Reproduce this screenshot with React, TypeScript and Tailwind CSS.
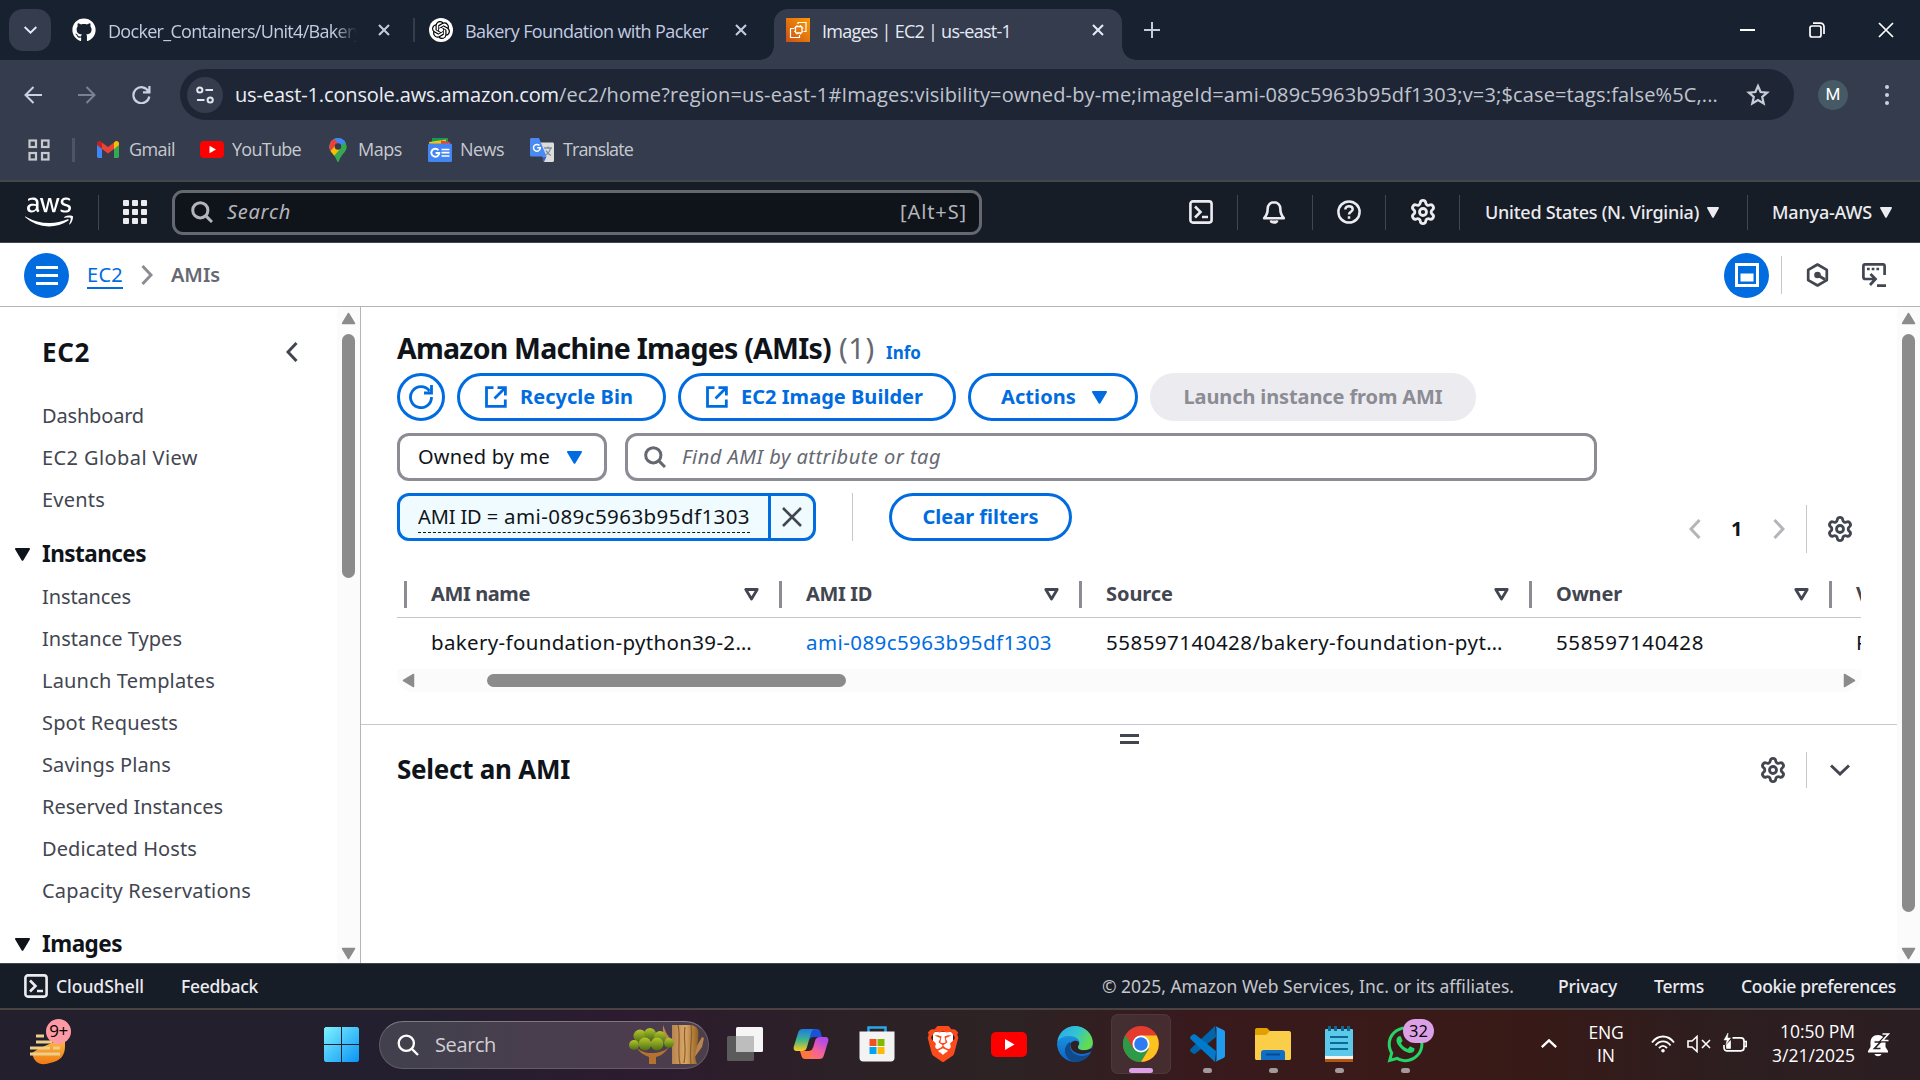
import React, { useLayoutEffect, useRef, useState } from 'react';
import { FaAws, FaGithub, FaWhatsapp } from 'react-icons/fa';
import { SiBrave, SiOpenai } from 'react-icons/si';
import { Settings } from 'lucide-react';

/* Text whose tracking is adjusted so that it spans `w` pixels. */
function Fit({ w, children, className = '' }: { w: number; children: string; className?: string }) {
  const ref = useRef<HTMLSpanElement>(null);
  const [spacing, setSpacing] = useState(0);
  useLayoutEffect(() => {
    const el = ref.current;
    if (el) setSpacing((w - el.getBoundingClientRect().width) / children.length);
  }, []);
  return (
    <span ref={ref} className={`inline-block shrink-0 whitespace-nowrap ${className}`} style={{ letterSpacing: spacing }}>
      {children}
    </span>
  );
}

const seg = "font-['Open_Sans','Noto_Sans',sans-serif]";
const ember = "font-['Noto_Sans','Open_Sans',sans-serif]";

function Close({ className = '' }: { className?: string }) {
  return (
    <svg className={`h-3 w-3 shrink-0 ${className}`} viewBox="0 0 12 12" stroke="currentColor" strokeWidth="2.1" fill="none">
      <path d="M1 1l10 10M11 1L1 11" />
    </svg>
  );
}

function Caret({ className = '' }: { className?: string }) {
  return (
    <svg className={`shrink-0 ${className}`} viewBox="0 0 15 13" fill="currentColor" preserveAspectRatio="none">
      <path d="M1.2 0h12.6c1 0 1.5 .8 1 1.6L8.4 12.3c-.4.7-1.4.7-1.8 0L.2 1.6C-.3.8.2 0 1.2 0z" />
    </svg>
  );
}

function SearchIcon({ className = '', sw = 3 }: { className?: string; sw?: number }) {
  return (
    <svg className={`shrink-0 ${className}`} viewBox="0 0 22 22" fill="none" stroke="currentColor" strokeWidth={sw}>
      <circle cx="9.3" cy="9.3" r="7.6" />
      <path d="M14.6 14.6L21 21" />
    </svg>
  );
}

function Shell({ className = '' }: { className?: string }) {
  return (
    <svg className={`h-6 w-6 shrink-0 ${className}`} viewBox="0 0 24 24" fill="none" stroke="currentColor" strokeWidth="2.6">
      <rect x="1.4" y="1.4" width="21.2" height="21.2" rx="2.5" />
      <path d="M6 6.5l5.5 5.5L6 17.5M13 17h6" />
    </svg>
  );
}

function Chevron({ dir, className = '' }: { dir: 'l' | 'r' | 'd' | 'u'; className?: string }) {
  const d = { l: 'M10.5 1L2 10l8.5 9', r: 'M1.5 1L10 10l-8.5 9', d: 'M1 1.5L10 10l9-8.5', u: 'M1 10L10 1.500l9 8.500' }[dir];
  const flat = dir === 'd' || dir === 'u';
  return (
    <svg className={`shrink-0 ${className}`} viewBox={flat ? '0 0 20 12' : '0 0 12 20'} fill="none" stroke="currentColor" strokeWidth="3">
      <path d={d} />
    </svg>
  );
}

function ScrollArrow({ d, className = '' }: { d: string; className?: string }) {
  return (
    <svg className={`h-[15px] w-[15px] shrink-0 text-[#8b8b8b] ${className}`} viewBox="0 0 15 15" fill="currentColor" stroke="currentColor" strokeWidth="1.5" strokeLinejoin="round">
      <path d={d} />
    </svg>
  );
}

function VScroll({ thumb }: { thumb: string }) {
  return (
    <div className="flex h-full w-[23px] shrink-0 flex-col items-center bg-[#fbfbfb]">
      <ScrollArrow className="mt-[4px]" d="M1.5 12.5L7.5 2.5l6 10z" />
      <div className={`mt-[8px] w-[13px] rounded-full bg-[#8b8b8b] ${thumb}`} />
      <ScrollArrow className="mt-auto mb-[2px]" d="M1.5 2.5L7.5 12.5l6-10z" />
    </div>
  );
}

/* ---------- Browser chrome ---------- */

function TabStrip() {
  return (
    <div className="flex h-[60px] items-start bg-[#182130] text-[18px] text-[#c3cbe0]">
      <div className="mt-[9px] ml-[9px] flex h-[42px] w-[42px] shrink-0 items-center justify-center rounded-[14px] bg-[#343c4d] text-[#e6eaf5]">
        <Chevron dir="d" className="h-[8px] w-[13px]" />
      </div>
      <div className="flex h-[60px] w-[362px] shrink-0 items-center">
        <FaGithub className="ml-[21px] h-6 w-6 shrink-0 text-white" />
        <div className="mt-[2px] ml-3 w-[249px] overflow-hidden [mask-image:linear-gradient(to_right,black_91%,transparent)]">
          <Fit w={254}>Docker_Containers/Unit4/Bakery</Fit>
        </div>
        <Close className="ml-[21px]" />
      </div>
      <div className="mt-[18px] h-6 w-[2px] shrink-0 bg-[#343c4d]" />
      <div className="flex h-[60px] w-[345px] shrink-0 items-center">
        <div className="ml-[14px] flex h-6 w-6 items-center justify-center rounded-full bg-white text-black">
          <SiOpenai className="h-[18px] w-[18px]" />
        </div>
        <Fit w={243} className="mt-[2px] ml-[12px]">Bakery Foundation with Packer</Fit>
        <Close className="ml-[27px]" />
      </div>
      <div className="flex h-[60px] shrink-0 items-end">
        <div className="h-[14px] w-[14px] bg-[radial-gradient(circle_at_0_0,#182130_13.5px,#343c4d_14px)]" />
        <div className="flex h-[51px] w-[348px] items-center rounded-t-[14px] bg-[#343c4d] text-[#e6eaf5]">
          <svg className="mb-[9px] ml-3 h-6 w-6" viewBox="0 0 24 24" fill="none" stroke="#fff">
            <defs>
              <linearGradient id="ec2" x1="0" y1="1" x2="1" y2="0">
                <stop offset="0" stopColor="#c8511b" />
                <stop offset="1" stopColor="#ff9900" />
              </linearGradient>
            </defs>
            <rect width="24" height="24" fill="url(#ec2)" stroke="none" />
            <rect x="9.5" y="8.5" width="6.5" height="6.5" rx="1" strokeWidth="1.3" />
            <path d="M11 7v1.5M14.5 7v1.5M11 15v1.5M14.5 15v1.5M8 10h1.5M8 13.500h1.500M16 10h1.500M16 13.500h1.500" strokeWidth=".9" />
            <path d="M12 6V4.500h8v9h-2M8 10.500H4.500v9h9V17" strokeWidth="1.2" />
          </svg>
          <Fit w={189} className="mb-[7px] ml-3">Images | EC2 | us-east-1</Fit>
          <Close className="mb-[9px] ml-[81px]" />
        </div>
        <div className="h-[14px] w-[14px] bg-[radial-gradient(circle_at_100%_0,#182130_13.5px,#343c4d_14px)]" />
      </div>
      <svg className="mt-[22px] ml-[8px] h-4 w-4 shrink-0" viewBox="0 0 16 16" stroke="currentColor" strokeWidth="2">
        <path d="M8 0v16M0 8h16" />
      </svg>
      <div className="ml-auto flex h-[60px] items-center text-white">
        <div className="h-[2px] w-[15px] bg-white" />
        <svg className="ml-[54px] h-4 w-4" viewBox="0 0 16 16" fill="none" stroke="currentColor" strokeWidth="1.7">
          <rect x="1" y="4" width="11" height="11" rx="2" />
          <path d="M4 1.200h7.500a3.500 3.500 0 0 1 3.500 3.500V12" />
        </svg>
        <svg className="mr-[26px] ml-[53px] h-4 w-4" viewBox="0 0 16 16" fill="none" stroke="currentColor" strokeWidth="1.700">
          <path d="M1 1l14 14M15 1L1 15" />
        </svg>
      </div>
    </div>
  );
}

function Toolbar() {
  return (
    <div className="flex h-[69px] items-center bg-[#343c4d] text-[#c9d1e6]">
      <svg className="ml-6 h-[18px] w-[18px] shrink-0" viewBox="0 0 18 18" fill="none" stroke="currentColor" strokeWidth="2">
        <path d="M18 9H1.500M9.500 1L1.500 9l8 8" />
      </svg>
      <svg className="ml-9 h-[18px] w-[18px] shrink-0 text-[#7a8193]" viewBox="0 0 18 18" fill="none" stroke="currentColor" strokeWidth="2">
        <path d="M0 9h16.500M8.500 1l8 8-8 8" />
      </svg>
      <svg className="ml-[36px] h-[19px] w-[19px] shrink-0" viewBox="0 0 19 19" fill="none" stroke="currentColor" strokeWidth="2.200">
        <path d="M16.500 6.500A8 8 0 1 0 17.300 11.500M17.400 1v6.400H11" />
      </svg>
      <div className="ml-[29px] flex h-[51px] w-[1614px] shrink-0 items-center rounded-full bg-[#1e2636]">
        <div className="ml-[7px] flex h-9 w-9 shrink-0 items-center justify-center rounded-full bg-[#343c4d]">
          <svg className="h-[18px] w-[18px]" viewBox="0 0 18 18" fill="none" stroke="#e3e6ee" strokeWidth="2">
            <circle cx="3.800" cy="4" r="2.600" />
            <path d="M9.500 4H17M1 14h7.500" />
            <circle cx="14.200" cy="14" r="2.600" />
          </svg>
        </div>
        <div className="ml-[12px] flex text-[20px]">
          <Fit w={324} className="text-[#eceef4]">us-east-1.console.aws.amazon.com</Fit>
          <Fit w={1159} className="text-[#c0c4cd]">/ec2/home?region=us-east-1#Images:visibility=owned-by-me;imageId=ami-089c5963b95df1303;v=3;$case=tags:false%5C,...</Fit>
        </div>
        <svg className="ml-[28px] h-[24px] w-[24px]" viewBox="0 0 24 24" fill="none" stroke="#c9ccd6" strokeWidth="2.200">
          <path d="M12 3l2.600 6 6.600.600-5 4.400 1.500 6.400L12 17l-5.700 3.400 1.500-6.400-5-4.400 6.600-.600z" />
        </svg>
      </div>
      <div className="ml-6 flex h-[30px] w-[30px] items-center justify-center rounded-full bg-[#455a64] font-['Roboto',sans-serif] text-[17px] text-white">M</div>
      <div className="ml-[37px] flex flex-col gap-1">
        <i className="h-1 w-1 rounded-full bg-current" />
        <i className="h-1 w-1 rounded-full bg-current" />
        <i className="h-1 w-1 rounded-full bg-current" />
      </div>
    </div>
  );
}

function Bookmarks() {
  return (
    <div className="flex h-[53px] items-center border-b-2 border-[#45474d] bg-[#343c4d] pb-[10px] text-[18px] text-[#c7c9cf]">
      <svg className="ml-7 h-[22px] w-[22px] shrink-0" viewBox="0 0 22 22" fill="none" stroke="#c7c9cf" strokeWidth="2.200">
        <rect x="1.500" y="1.500" width="6.500" height="6.500" />
        <rect x="14" y="1.500" width="6.500" height="6.500" />
        <rect x="1.500" y="14" width="6.500" height="6.500" />
        <rect x="14" y="14" width="6.500" height="6.500" />
      </svg>
      <div className="ml-[22px] h-6 w-[3px] bg-[#4c5465]" />
      <svg className="ml-[22px] h-[17px] w-[22px] shrink-0" viewBox="0 0 22 17">
        <path d="M0 3v12.500c0 .800.700 1.500 1.500 1.500H5V7z" fill="#4285f4" />
        <path d="M17 17h3.500c.800 0 1.500-.700 1.500-1.500V3l-5 4z" fill="#34a853" />
        <path d="M17 1.500V8l5-4V2.500C22 .500 19.800-.600 18.200.600z" fill="#fbbc04" />
        <path d="M5 8V1.500L11 6l6-4.500V8l-6 4.500z" fill="#ea4335" />
        <path d="M0 2.500V4l5 4V1.500L3.800.600C2.200-.600 0 .500 0 2.500z" fill="#c5221f" />
      </svg>
      <Fit w={46} className="ml-[10px]">Gmail</Fit>
      <svg className="ml-[25px] h-[17px] w-6 shrink-0" viewBox="0 0 24 17">
        <rect width="24" height="17" rx="4" fill="#f00" />
        <path d="M9.500 4.800v7.400l6.500-3.700z" fill="#fff" />
      </svg>
      <Fit w={69} className="ml-[8px]">YouTube</Fit>
      <svg className="ml-[28px] h-6 w-[18px] shrink-0" viewBox="0 0 18 24">
        <defs>
          <clipPath id="pin">
            <path d="M9 0a8.700 8.700 0 0 1 8.700 8.700c0 5.600-5.700 7.300-7.700 14.300-.300 1.300-1.700 1.300-2 0C6 16 .300 14.300.300 8.700A8.700 8.700 0 0 1 9 0z" />
          </clipPath>
        </defs>
        <g clipPath="url(#pin)">
          <rect width="18" height="24" fill="#34a853" />
          <path d="M0 0h18L5 15 0 11z" fill="#4285f4" />
          <path d="M0 0h5l4 5-7 8-4-3z" fill="#ea4335" />
          <path d="M0 14.500L7 7l5 3-8 9z" fill="#fbbc04" />
          <path d="M4 0h9l5 4-7 3z" fill="#4285f4" />
        </g>
        <circle cx="9" cy="8.500" r="3.200" fill="#343c4d" />
      </svg>
      <Fit w={44} className="ml-[11px]">Maps</Fit>
      <svg className="ml-[26px] h-6 w-6 shrink-0" viewBox="0 0 24 24">
        <path d="M4 0h16v6H4z" fill="#0c9d58" />
        <path d="M1 4l17-2.500V8H2z" fill="#ffc107" />
        <path d="M13 2.500L22 4v4h-9z" fill="#ea4335" />
        <rect y="5.500" width="24" height="18.500" rx="1.500" fill="#4285f4" />
        <path d="M13.500 11.500h8M13.500 14.700h8M13.500 18h8" stroke="#fff" strokeWidth="1.700" />
        <path d="M10.500 12.300A4 4 0 1 0 11.300 15H7.600" stroke="#fff" strokeWidth="1.900" fill="none" />
      </svg>
      <Fit w={44} className="ml-[8px]">News</Fit>
      <svg className="ml-[26px] h-6 w-6 shrink-0" viewBox="0 0 24 24">
        <path d="M9 4.500h13.500c.800 0 1.500.700 1.500 1.500v16.500c0 .800-.700 1.500-1.500 1.500H14z" fill="#dcdcdc" />
        <path d="M14 10h8M18 8.500V10M20.500 10c-.500 3-2.500 5.500-5 7M16 12.500c1 2 3 4 5 5" stroke="#7a8fa0" strokeWidth="1.300" fill="none" />
        <path d="M12 18.500h4.500L14 24z" fill="#3a5ccc" />
        <path d="M1.500 0H9l7.500 18.500h-15C.700 18.500 0 17.800 0 17V1.500C0 .700.700 0 1.500 0z" fill="#4a8af4" />
        <path d="M9.500 7.600a3.400 3.400 0 1 0 .800 2.200H7.200" stroke="#fff" strokeWidth="1.500" fill="none" />
      </svg>
      <Fit w={70} className="ml-[9px]">Translate</Fit>
    </div>
  );
}

/* ---------- AWS console ---------- */

const Sep = ({ className = '' }: { className?: string }) => <div className={`h-[35px] w-px shrink-0 bg-[#424650] ${className}`} />;

function AwsHeader() {
  return (
    <div className="flex h-[61px] items-center border-b border-[#424650] bg-[#161d26] text-[18px] font-medium text-[#ebebf0]">
      <FaAws className="ml-[25px] h-[48px] w-[48px] shrink-0 text-white" />
      <Sep className="ml-[25px]" />
      <div className="ml-6 grid shrink-0 grid-cols-3 gap-[3px]">
        {Array.from({ length: 9 }, (_, i) => (
          <i key={i} className="h-[6px] w-[6px] rounded-[1px] bg-[#ebebf0]" />
        ))}
      </div>
      <div className="ml-[25px] flex h-[45px] w-[810px] shrink-0 items-center rounded-[11px] border-[3px] border-[#656871] bg-[#0f141a] text-[20px] font-normal text-[#b4b4bb]">
        <SearchIcon className="ml-4 h-[22px] w-[22px]" />
        <Fit w={64} className="ml-[14px] italic">Search</Fit>
        <Fit w={67} className="mr-[12px] ml-auto">[Alt+S]</Fit>
      </div>
      <Shell className="ml-[207px]" />
      <Sep className="ml-6" />
      <svg className="ml-[24px] h-6 w-6 shrink-0" viewBox="0 0 24 24" fill="none" stroke="currentColor" strokeWidth="2.600">
        <path d="M12 2.200c-3.700 0-6.300 2.800-6.300 6.300 0 5-1.300 7.300-3.500 9.700h19.600c-2.200-2.400-3.500-4.700-3.500-9.700 0-3.500-2.600-6.300-6.300-6.300z" strokeLinejoin="round" />
        <path d="M8.500 20.500c.500 3 6.500 3 7 0" fill="currentColor" strokeWidth="2" />
      </svg>
      <Sep className="ml-[26px]" />
      <svg className="ml-6 h-6 w-6 shrink-0" viewBox="0 0 24 24" fill="none" stroke="currentColor" strokeWidth="2.500">
        <circle cx="12" cy="12" r="10.600" />
        <path d="M8.300 9.500c0-4.600 7.400-4.300 7.400-.200 0 2.500-3.700 2.500-3.700 5.200M12 16.300v2.500" />
      </svg>
      <Sep className="ml-6" />
      <Settings className="ml-[23px] h-[28px] w-[28px] shrink-0" strokeWidth={2.400} />
      <Sep className="ml-[22px]" />
      <Fit w={214} className="ml-[25px]">United States (N. Virginia)</Fit>
      <Caret className="ml-[8px] h-[11px] w-3" />
      <Sep className="ml-[28px] w-[2px]" />
      <Fit w={100} className="ml-6">Manya-AWS</Fit>
      <Caret className="ml-[8px] h-[11px] w-3" />
    </div>
  );
}

function Breadcrumbs() {
  return (
    <div className="flex h-[64px] items-center border-b border-[#b4b4bb] bg-white pt-px text-[20px]">
      <div className="ml-6 flex h-[45px] w-[45px] shrink-0 flex-col items-center justify-center gap-[5px] rounded-full bg-[#006ce0]">
        <i className="h-[3px] w-[22px] bg-white" />
        <i className="h-[3px] w-[22px] bg-white" />
        <i className="h-[3px] w-[22px] bg-white" />
      </div>
      <div className="ml-[18px] h-[27px] border-b-2 border-[#006ce0] leading-[25px] text-[#006ce0]">
        <Fit w={36}>EC2</Fit>
      </div>
      <Chevron dir="r" className="ml-[18px] h-5 w-3 text-[#8c8c94]" />
      <Fit w={49} className="ml-[18px] font-semibold text-[#656871]">AMIs</Fit>
      <div className="ml-auto flex h-[45px] w-[45px] items-center justify-center rounded-full bg-[#006ce0]">
        <svg className="h-6 w-6" viewBox="0 0 24 24">
          <rect x="1.500" y="1.500" width="21" height="21" fill="none" stroke="#fff" strokeWidth="3" />
          <rect x="5.500" y="10.500" width="13" height="8" fill="#fff" />
        </svg>
      </div>
      <div className="ml-3 h-[38px] w-px bg-[#c6c6cd]" />
      <svg className="ml-[24px] h-6 w-[23px] text-[#424650]" viewBox="0 0 23 24" fill="none" stroke="currentColor" strokeWidth="2.700">
        <path d="M11.500 1.500l9.300 5.300v10.400l-9.300 5.300-9.300-5.300V6.800z" strokeLinejoin="round" />
        <circle cx="11.500" cy="12" r="3.300" fill="currentColor" stroke="none" />
        <path d="M11.500 12l7.500 4.500" strokeWidth="3" />
      </svg>
      <svg className="mr-[34px] ml-[33px] h-6 w-6 text-[#424650]" viewBox="0 0 24 24" fill="none" stroke="currentColor" strokeWidth="2.700">
        <path d="M22.600 12V3c0-1-.600-1.600-1.600-1.600H3c-1 0-1.600.600-1.600 1.600v11c0 1.500.600 2 2 2h9M8.500 11l5 5-5.500 6M15 22.600h9" />
        <path d="M5 6h13" strokeDasharray="2.700 2" />
      </svg>
    </div>
  );
}

const topLinks: [string, number][] = [['Dashboard', 102], ['EC2 Global View', 156], ['Events', 63]];
const instanceLinks: [string, number][] = [
  ['Instances', 89], ['Instance Types', 140], ['Launch Templates', 173], ['Spot Requests', 136],
  ['Savings Plans', 129], ['Reserved Instances', 181], ['Dedicated Hosts', 155], ['Capacity Reservations', 209],
];

function NavLink({ label, w }: { label: string; w: number }) {
  return (
    <div className="flex h-[42px] shrink-0 items-center pl-[42px] text-[20px] text-[#424650]">
      <Fit w={w}>{label}</Fit>
    </div>
  );
}

function NavGroup({ label, w }: { label: string; w: number }) {
  return (
    <div className="mt-[10px] flex h-[45px] shrink-0 items-center pt-px pl-[15px] text-[22.5px] font-bold text-[#0f141a]">
      <Caret className="h-[13px] w-[15px]" />
      <Fit w={w} className="ml-3">{label}</Fit>
    </div>
  );
}

function Sidebar() {
  return (
    <div className="flex w-[361px] shrink-0 overflow-hidden border-r border-[#b4b4bb] bg-white">
      <div className="flex h-full w-[337px] flex-col overflow-hidden">
        <div className="flex h-[88px] shrink-0 items-center pt-[2px] pl-[42px] text-[26px] font-bold text-[#0f141a]">
          <Fit w={48}>EC2</Fit>
          <Chevron dir="l" className="ml-[196px] h-5 w-3 text-[#424650]" />
        </div>
        {topLinks.map(([l, w]) => <NavLink key={l} label={l} w={w} />)}
        <NavGroup label="Instances" w={104} />
        {instanceLinks.map(([l, w]) => <NavLink key={l} label={l} w={w} />)}
        <div className="-mt-px shrink-0">
          <NavGroup label="Images" w={80} />
        </div>
      </div>
      <VScroll thumb="h-[244px]" />
    </div>
  );
}

const pill = 'flex h-12 shrink-0 items-center rounded-full border-[3px] border-[#006ce0] bg-white font-bold text-[#006ce0]';

function External({ className = '' }: { className?: string }) {
  return (
    <svg className={`h-[22px] w-[22px] shrink-0 ${className}`} viewBox="0 0 22 22" fill="none" stroke="currentColor" strokeWidth="2.800">
      <path d="M8.500 1.600H1.500v18.800h18.800V13.500M12.500 1.600h7.900v7.900M20 2L9.500 12.500" />
    </svg>
  );
}

const columns: { title: string; tw: number; cell: string; cw: number; box: string; link?: boolean }[] = [
  { title: 'AMI name', tw: 99, cell: 'bakery-foundation-python39-2…', cw: 321, box: 'w-[375px]' },
  { title: 'AMI ID', tw: 66, cell: 'ami-089c5963b95df1303', cw: 246, box: 'w-[300px]', link: true },
  { title: 'Source', tw: 67, cell: '558597140428/bakery-foundation-pyt…', cw: 397, box: 'w-[450px]' },
  { title: 'Owner', tw: 66, cell: '558597140428', cw: 148, box: 'w-[300px]' },
];

function Table() {
  return (
    <div className="w-[1464px] overflow-hidden text-[20px]">
      <div className="flex h-[65px] items-center border-b border-[#c6c6cd] pt-[19px] pl-[7px] font-bold text-[#424650]">
        {columns.map((c) => (
          <div key={c.title} className={`flex shrink-0 items-center ${c.box}`}>
            <div className="h-[27px] w-[3px] bg-[#8c8c94]" />
            <Fit w={c.tw} className="-mt-[2px] ml-6">{c.title}</Fit>
            <svg className="mr-[20px] ml-auto h-[13px] w-[15px]" viewBox="0 0 15 13" fill="none" stroke="currentColor" strokeWidth="2.800" strokeLinejoin="round">
              <path d="M1.800 1.500h11.400L7.500 11z" />
            </svg>
          </div>
        ))}
        <div className="h-[27px] w-[3px] shrink-0 bg-[#8c8c94]" />
        <span className="-mt-[2px] ml-6 shrink-0">Visibility</span>
      </div>
      <div className="flex h-[51px] items-center pb-[2px] pl-[34px] text-[20.5px] text-[#0f141a]">
        {columns.map((c) => (
          <div key={c.title} className={`shrink-0 ${c.box} ${c.link ? 'text-[#006ce0]' : ''}`}>
            <Fit w={c.cw}>{c.cell}</Fit>
          </div>
        ))}
        <span className="shrink-0">Private</span>
      </div>
      <div className="flex h-[23px] items-center rounded-b-2xl bg-[#fbfbfb]">
        <ScrollArrow className="ml-[4px]" d="M12.500 1.500L2.500 7.500l10 6z" />
        <div className="ml-[71px] h-[13px] w-[359px] rounded-full bg-[#8b8b8b]" />
        <ScrollArrow className="mr-[4px] ml-auto" d="M2.500 1.500L12.500 7.500l-10 6z" />
      </div>
    </div>
  );
}

function Main() {
  return (
    <div className="flex min-w-0 flex-1 flex-col">
      <div className="flex h-[417px] shrink-0 flex-col pl-9 text-[20px] text-[#0f141a]">
        <div className="flex h-[66px] shrink-0 items-center pt-4">
          <div className="flex items-baseline">
            <Fit w={434} className="text-[28.5px] font-bold">Amazon Machine Images (AMIs)</Fit>
            <Fit w={36} className="ml-[8px] text-[29px] text-[#656871]">(1)</Fit>
            <Fit w={35} className="ml-[11px] text-[17px] font-bold text-[#006ce0]">Info</Fit>
          </div>
        </div>
        <div className="flex h-12 shrink-0 gap-3">
          <div className={`${pill} w-12 justify-center`}>
            <svg className="h-6 w-6" viewBox="0 0 24 24" fill="none" stroke="currentColor" strokeWidth="2.800">
              <path d="M22.500 12A10.500 10.500 0 1 1 20.500 6M22.500 0v8H15" />
            </svg>
          </div>
          <div className={`${pill} w-[209px]`}>
            <External className="ml-[25px]" />
            <Fit w={113} className="ml-[13px]">Recycle Bin</Fit>
          </div>
          <div className={`${pill} w-[278px]`}>
            <External className="ml-[25px]" />
            <Fit w={182} className="ml-[13px]">EC2 Image Builder</Fit>
          </div>
          <div className={`${pill} w-[170px]`}>
            <Fit w={75} className="ml-[30px]">Actions</Fit>
            <Caret className="ml-4 h-[13px] w-[15px]" />
          </div>
          <div className="flex h-12 w-[326px] items-center justify-center rounded-full bg-[#ebebf0] font-bold text-[#8c8c94]">
            <Fit w={259}>Launch instance from AMI</Fit>
          </div>
        </div>
        <div className="mt-3 flex h-12 shrink-0">
          <div className="flex w-[210px] items-center rounded-[12px] border-[3px] border-[#8c8c94]">
            <Fit w={132} className="ml-[18px]">Owned by me</Fit>
            <Caret className="ml-[17px] h-[13px] w-[15px] text-[#006ce0]" />
          </div>
          <div className="ml-[18px] flex w-[972px] items-center rounded-[12px] border-[3px] border-[#8c8c94] text-[#656871]">
            <SearchIcon className="ml-4 h-[22px] w-[22px]" />
            <Fit w={259} className="ml-4 italic">Find AMI by attribute or tag</Fit>
          </div>
        </div>
        <div className="mt-3 flex h-[60px] shrink-0">
          <div className="flex h-12 w-[419px] shrink-0 items-center rounded-[12px] border-[3px] border-[#006ce0] bg-[#f0fbff]">
            <div className="ml-[18px] flex h-[31px] w-[332px] shrink-0 items-center border-b border-dashed border-[#0f141a]">
              <Fit w={80}>AMI ID =</Fit>
              <Fit w={246} className="ml-[6px] text-[20.5px]">ami-089c5963b95df1303</Fit>
            </div>
            <div className="ml-[18px] h-full w-[3px] shrink-0 bg-[#006ce0]" />
            <svg className="ml-[11px] h-5 w-5 shrink-0 text-[#424650]" viewBox="0 0 20 20" stroke="currentColor" strokeWidth="2.600">
              <path d="M1 1l18 18M19 1L1 19" />
            </svg>
          </div>
          <div className="ml-9 h-12 w-px bg-[#c6c6cd]" />
          <div className={`${pill} ml-9 w-[183px] justify-center`}>
            <Fit w={116}>Clear filters</Fit>
          </div>
          <div className="mt-3 ml-auto flex h-12 items-center">
            <Chevron dir="l" className="h-5 w-3 text-[#b4b4bb]" />
            <Fit w={12} className="ml-[30px] font-bold">1</Fit>
            <Chevron dir="r" className="ml-[30px] h-5 w-3 text-[#b4b4bb]" />
            <div className="ml-[21px] h-12 w-px bg-[#c6c6cd]" />
            <Settings className="mr-[43px] ml-[19px] h-[28px] w-[28px] text-[#424650]" strokeWidth={2.400} />
          </div>
        </div>
        <Table />
      </div>
      <div className="flex flex-1 flex-col border-t border-[#c6c6cd] text-[#0f141a]">
        <div className="flex h-[27px] flex-col items-center gap-[4px] pt-[9px]">
          <i className="h-[3px] w-[19px] bg-[#424650]" />
          <i className="h-[3px] w-[19px] bg-[#424650]" />
        </div>
        <div className="flex h-9 items-center pl-9">
          <Fit w={173} className="-mt-[2px] text-[26px] font-bold">Select an AMI</Fit>
          <Settings className="ml-auto h-[28px] w-[28px] text-[#424650]" strokeWidth={2.400} />
          <div className="ml-[19px] h-9 w-px bg-[#c6c6cd]" />
          <Chevron dir="d" className="mr-[47px] ml-[23px] h-3 w-5 text-[#424650]" />
        </div>
      </div>
    </div>
  );
}

function Footer() {
  return (
    <div className="flex h-[45px] items-center border-t border-[#424650] bg-[#161d26] text-[17.5px] font-medium text-[#ebebf0]">
      <Shell className="ml-6" />
      <Fit w={88} className="ml-2">CloudShell</Fit>
      <Fit w={77} className="ml-[37px]">Feedback</Fit>
      <Fit w={412} className="ml-auto font-normal text-[#c6c6cd]">© 2025, Amazon Web Services, Inc. or its affiliates.</Fit>
      <Fit w={59} className="ml-[44px]">Privacy</Fit>
      <Fit w={50} className="ml-[37px]">Terms</Fit>
      <Fit w={155} className="mr-[24px] ml-[37px]">Cookie preferences</Fit>
    </div>
  );
}

/* ---------- Windows taskbar ---------- */

function TaskButton({ children, dot, active }: { children: React.ReactNode; dot?: boolean; active?: boolean }) {
  return (
    <div className={`relative flex h-[60px] w-[60px] shrink-0 items-center justify-center rounded-[7px] ${active ? 'bg-white/8 ring-1 ring-white/5 ring-inset' : ''}`}>
      {children}
      {dot && <i className="absolute bottom-[1px] h-[5px] w-[9px] rounded-full bg-[#a39a9c]" />}
      {active && <i className="absolute bottom-[1px] h-[5px] w-6 rounded-full bg-[#dca0e6]" />}
    </div>
  );
}

function Taskbar() {
  return (
    <div className="flex h-[72px] items-center border-t-2 border-[#4b4244] bg-[linear-gradient(90deg,#231f2c_0%,#231f2e_22%,#2d1b2f_33%,#2c2225_46%,#2d2224_53%,#381a1d_62%,#3a1a18_74%,#371a17_80%,#2d1e20_90%,#2b1e22_100%)] pb-[2px] text-white">
      <div className="relative mt-px ml-[30px] h-[52px] w-[42px] shrink-0">
        <svg className="h-[52px] w-[42px]" viewBox="0 0 42 52">
          <defs>
            <linearGradient id="sun" x1="0" y1="0" x2="0" y2="1">
              <stop offset="0" stopColor="#ffc04a" />
              <stop offset="1" stopColor="#f07a12" />
            </linearGradient>
          </defs>
          <path d="M2 34c3 15 15 11 18 10 11-2 15-8 15-17V18L8 30z" fill="url(#sun)" />
          <path d="M6 17h8M6 23h16M0 29h20M23 29h7M0 35h30" stroke="#ecd08a" strokeWidth="3" />
        </svg>
        <div className={`absolute top-0 left-[16px] flex h-[25px] w-[25px] items-center justify-center rounded-full bg-[#ff99a4] text-[17px] tracking-tight text-black ${seg}`}>9+</div>
      </div>
      <svg className="ml-[252px] h-[35px] w-[35px] shrink-0" viewBox="0 0 35 35">
        <defs>
          <linearGradient id="win" x1="0" y1="0" x2="1" y2="1">
            <stop offset="0" stopColor="#7df3ff" />
            <stop offset="1" stopColor="#0a93f5" />
          </linearGradient>
        </defs>
        <path d="M1.500 0H17v17H0V1.500zM18 0h15.500L35 1.500V17H18zM0 18h17v17H1.500L0 33.500zM18 18h17v15.500L33.500 35H18z" fill="url(#win)" />
      </svg>
      <div className="mt-px ml-5 flex h-12 w-[330px] shrink-0 items-center overflow-hidden rounded-full border border-white/15 border-t-white/30 bg-white/15">
        <SearchIcon className="ml-[17px] h-[22px] w-[22px]" sw={2.300} />
        <Fit w={61} className="ml-4 text-[20px] text-[#d2cfd4]">Search</Fit>
        <svg className="mr-[3px] ml-auto h-[40px] w-[76px]" viewBox="0 0 76 40">
          <defs>
            <linearGradient id="leaf" x1="0" y1="0" x2="0" y2="1">
              <stop offset="0" stopColor="#b5c52c" />
              <stop offset="1" stopColor="#4b7014" />
            </linearGradient>
            <linearGradient id="bark" x1="0" y1="0" x2="1" y2="0">
              <stop offset="0" stopColor="#b98450" />
              <stop offset=".5" stopColor="#d8a868" />
              <stop offset="1" stopColor="#94601f" />
            </linearGradient>
          </defs>
          <path d="M20 39V32c-5-2-9-4-12-9 5 4 9 5 14 5 7 0 14-2 18-6-3 5-8 9-13 10v7z" fill="#b5712f" />
          <path d="M34 0c3 7 4 12 13 18v7c-9-5-14-12-13-25zM66 24l7-12 2 1-2 9-8 11z" fill="#b98450" />
          <path d="M43 0h20c7 2 7 7 6 15-1 10-5 15-1 24H43z" fill="url(#bark)" />
          <path d="M49 0c3 12-1 25 2 39M56 2c-2 13 2 20-1 36M62 0c2 12-2 24 0 39" stroke="#8c5c2a" strokeWidth="1.200" fill="none" />
          <g fill="url(#leaf)">
            <circle cx="11" cy="11" r="6.500" />
            <circle cx="21" cy="9" r="6" />
            <circle cx="31" cy="12" r="6" />
            <circle cx="5" cy="20" r="5" />
            <circle cx="16" cy="19" r="6.500" />
            <circle cx="28" cy="19" r="6.500" />
            <circle cx="40" cy="18" r="5" />
          </g>
        </svg>
      </div>
      <div className="ml-[6px] flex gap-[6px]">
        <TaskButton>
          <svg className="h-9 w-9" viewBox="0 0 36 36">
            <rect x="9" y="1" width="27" height="25" rx="1.500" fill="#f5f5f5" />
            <rect x="0" y="10" width="27" height="25" rx="1.500" fill="#5b5b5b" />
            <rect x="9" y="10" width="18" height="16" fill="#bdbdbd" />
          </svg>
        </TaskButton>
        <TaskButton>
          <svg className="h-[34px] w-[36px]" viewBox="0 0 36 34">
            <defs>
              <linearGradient id="cpa" x1="0" y1="0" x2="0" y2="1">
                <stop offset="0" stopColor="#1c7ce6" />
                <stop offset=".5" stopColor="#3fb58a" />
                <stop offset="1" stopColor="#ffc91f" />
              </linearGradient>
              <linearGradient id="cpb" x1="0" y1="1" x2=".5" y2="0">
                <stop offset="0" stopColor="#ff7a54" />
                <stop offset=".5" stopColor="#f2609d" />
                <stop offset="1" stopColor="#b44ae8" />
              </linearGradient>
            </defs>
            <path d="M17 2h7c2 0 3 1 3.500 3l1.500 5h-8c-3 0-4 1-5 4z" fill="#1c50d8" />
            <path d="M19 32h-7c-2 0-3-1-3.500-3L7 24h8c3 0 4-1 5-4z" fill="#ff7440" />
            <path d="M10 2h12c-2 0-3 1-4 4l-4 14c-1 3-2 4-5 4H4c-3 0-4-2-3-5L5 6c1-3 2-4 5-4z" fill="url(#cpa)" />
            <path d="M26 32H14c2 0 3-1 4-4l4-14c1-3 2-4 5-4h5c3 0 4 2 3 5l-4 13c-1 3-2 4-5 4z" fill="url(#cpb)" />
          </svg>
        </TaskButton>
        <TaskButton>
          <svg className="h-9 w-9" viewBox="0 0 36 36">
            <path d="M9.500 7V1.500h17V7" fill="none" stroke="#27a8ee" strokeWidth="2.500" />
            <path d="M.500 5.500h35V32c0 2-1.500 3.500-3.500 3.500H4C2 35.500.500 34 .500 32z" fill="#f3f3f3" />
            <path d="M10.500 13h7v7h-7z" fill="#f25022" />
            <path d="M18.500 13h7v7h-7z" fill="#7fba00" />
            <path d="M10.500 21h7v7h-7z" fill="#00a4ef" />
            <path d="M18.500 21h7v7h-7z" fill="#ffb900" />
          </svg>
        </TaskButton>
        <TaskButton>
          <div className="relative flex h-9 w-9 items-center justify-center">
            <div className="absolute h-[24px] w-[20px] rounded-b-[10px] bg-white" />
            <SiBrave className="relative h-9 w-9 text-[#fb4a1c]" />
          </div>
        </TaskButton>
        <TaskButton>
          <svg className="h-[25px] w-9" viewBox="0 0 36 25">
            <rect width="36" height="25" rx="5" fill="#f00" />
            <path d="M14 7v11l9.500-5.500z" fill="#fff" />
          </svg>
        </TaskButton>
        <TaskButton>
          <svg className="h-9 w-9" viewBox="0 0 36 36">
            <defs>
              <linearGradient id="eda" x1="0" y1="0" x2="1" y2=".4">
                <stop offset="0" stopColor="#2aa6e8" />
                <stop offset=".55" stopColor="#32c3d5" />
                <stop offset="1" stopColor="#63dc4e" />
              </linearGradient>
              <linearGradient id="edb" x1="0" y1="0" x2="0" y2="1">
                <stop offset="0" stopColor="#1fa3e6" />
                <stop offset="1" stopColor="#0d62c9" />
              </linearGradient>
              <clipPath id="edge">
                <circle cx="18" cy="18" r="18" />
              </clipPath>
            </defs>
            <g clipPath="url(#edge)">
              <circle cx="18" cy="18" r="18" fill="url(#edb)" />
              <path d="M13 19c0 7 6 11 12 11 3 0 6-1 9-3-3 6-9 9-16 9-7-1-11-8-10-13 1-4 3-6 5-7z" fill="#114a8b" />
              <path d="M13.500 17c-1 7 5 11 11 11 4 0 7-1 9.500-2.500l4 1.500V20c-5 5-17 6-17 1 0-1 1-2 1-4 0-2-4-4-8.500 0z" fill="#2e2023" />
              <path d="M0 17C1 7 8 0 18 0s18 7 18 15-5 9-9 9c-5 0-6-2-6-3 0-1 1.500-2 1.500-4.500C22.500 13 18 10 12 10 6 10 1 13 0 17z" fill="url(#eda)" />
            </g>
          </svg>
        </TaskButton>
        <TaskButton active>
          <svg className="h-9 w-9" viewBox="0 0 36 36">
            <circle cx="18" cy="18" r="18" fill="#e33b2e" />
            <path d="M2.400 9A18 18 0 0 0 18 36l8-13.500H10.200z" fill="#2c9a47" />
            <path d="M18 36A18 18 0 0 0 33.600 9.500H18l7.800 13.500z" fill="#fcc31e" />
            <circle cx="18" cy="18" r="8.500" fill="#fff" />
            <circle cx="18" cy="18" r="6.800" fill="#2f7bf0" />
          </svg>
        </TaskButton>
        <TaskButton dot>
          <svg className="h-9 w-9" viewBox="0 0 36 36">
            <path d="M26 0L2 22.500c-1.500 1.500-1 2.500 0 3.500l2 1.500c1 .500 2 .500 3-.500L27 11z" fill="#0065a9" />
            <path d="M26 36L2 13.500c-1.500-1.500-1-2.500 0-3.500l2-1.500c1-.500 2-.500 3 .500L27 25z" fill="#007acc" />
            <path d="M26 0l8.500 4c1 .500 1.500 1.500 1.500 2.500v23c0 1-.500 2-1.500 2.500L26 36c1-.500 1.500-1.500 1.500-3V3c0-1.500-.500-2.500-1.500-3z" fill="#1f9cf0" />
          </svg>
        </TaskButton>
        <TaskButton dot>
          <svg className="h-9 w-9" viewBox="0 0 36 36">
            <path d="M0 4c0-1 .500-2 2-2h10l4 4-3 4H0z" fill="#e0a100" />
            <path d="M0 9h11l4-4h19c1.500 0 2 1 2 2v25c0 1.500-.500 2-2 2H2c-1.500 0-2-.500-2-2z" fill="#fbce4a" />
            <path d="M6 34v-7c0-2 1-3 3-3h18c2 0 3 1 3 3v7z" fill="#0f6fc6" />
            <path d="M11 28.500h14" stroke="#0a4a8c" strokeWidth="2" />
          </svg>
        </TaskButton>
        <TaskButton dot>
          <svg className="h-9 w-7" viewBox="0 0 28 36">
            <path d="M0 31h28v5H0z" fill="#b5560f" />
            <path d="M0 28h28v5H0z" fill="#f4f4f4" />
            <rect y="3" width="28" height="27" rx="1" fill="#5cc8ea" />
            <path d="M5 11h18M5 17h18M5 23h18" stroke="#0b6a94" strokeWidth="2" />
            <path d="M4.500 0v5M10.500 0v5M17.500 0v5M23.500 0v5" stroke="#0b6a94" strokeWidth="3" />
          </svg>
        </TaskButton>
        <TaskButton dot>
          <FaWhatsapp className="h-[41px] w-[41px] text-[#25d366]" />
          <div className={`absolute top-[5px] left-[28px] flex h-6 w-[31px] items-center justify-center rounded-full bg-[#dca0e6] text-[16.5px] text-black ${seg}`}>32</div>
        </TaskButton>
      </div>
      <Chevron dir="u" className="mr-[32px] ml-auto h-[10px] w-4" />
      <div className="mt-[2px] flex h-[48px] w-[34px] flex-col items-center text-[17.5px] leading-[23px]">
        <Fit w={35}>ENG</Fit>
        <Fit w={18}>IN</Fit>
      </div>
      <svg className="ml-[28px] h-[18px] w-6" viewBox="0 0 24 18" fill="none" stroke="currentColor" strokeWidth="1.800">
        <path d="M1 7.500c6-8 16-8 22 0M4.500 10.500c4-5.500 11-5.500 15 0M8 13.200c2.500-3 5.500-3 8 0" />
        <circle cx="12" cy="15.800" r="1.800" fill="currentColor" stroke="none" />
      </svg>
      <svg className="ml-3 h-[18px] w-6" viewBox="0 0 24 18" fill="none" stroke="currentColor" strokeWidth="1.600">
        <path d="M1 6v6h4l5 4.500V1.500L5 6zM15 5l8 8M23 5l-8 8" />
      </svg>
      <svg className="-mt-[3px] ml-3 h-5 w-6" viewBox="0 0 24 20" fill="none" stroke="currentColor" strokeWidth="1.700">
        <path d="M9.500 4.800H18c1.500 0 3 1 3 3v7c0 2-1.500 3-3 3H4c-1.500 0-3-1-3-3V12M21.500 8.500h1.800v5h-1.800" />
        <path d="M5 0L1 7h3l-1 4.500L7.500 5h-3z" fill="currentColor" strokeWidth=".5" />
        <path d="M4 15v-3l3-3v6z" fill="currentColor" />
      </svg>
      <div className="ml-[24px] flex h-[50px] w-[84px] flex-col items-end text-[17.5px] leading-[24px]">
        <Fit w={75}>10:50 PM</Fit>
        <Fit w={83}>3/21/2025</Fit>
      </div>
      <svg className="mr-[30px] ml-[13px] h-[25px] w-[22px]" viewBox="0 0 22 25">
        <path d="M10 3c-5 0-7.500 3.500-7.500 7.500V15L0 19v1.500h20V19l-2.500-4v-4.500C17.500 6 14 3 10 3z" fill="#fff" />
        <path d="M6.500 22h7c-1 3-6 3-7 0z" fill="#fff" />
        <path d="M6.500 10h6l-6 6.500h6" stroke="#2b1e20" strokeWidth="1.600" fill="none" />
        <path d="M14.500 2h6l-6 6.500h6" stroke="#2b1e20" strokeWidth="4" fill="none" />
        <path d="M14.500 2h6l-6 6.500h6" stroke="#fff" strokeWidth="1.600" fill="none" />
      </svg>
    </div>
  );
}

export default function App() {
  return (
    <div className="flex h-[1080px] w-[1920px] flex-col overflow-hidden bg-white">
      <div className={seg}>
        <TabStrip />
        <Toolbar />
        <Bookmarks />
      </div>
      <div className={`flex min-h-0 flex-1 flex-col ${ember}`}>
        <AwsHeader />
        <Breadcrumbs />
        <div className="flex min-h-0 flex-1">
          <Sidebar />
          <Main />
          <VScroll thumb="h-[578px]" />
        </div>
        <Footer />
      </div>
      <div className={seg}>
        <Taskbar />
      </div>
    </div>
  );
}
